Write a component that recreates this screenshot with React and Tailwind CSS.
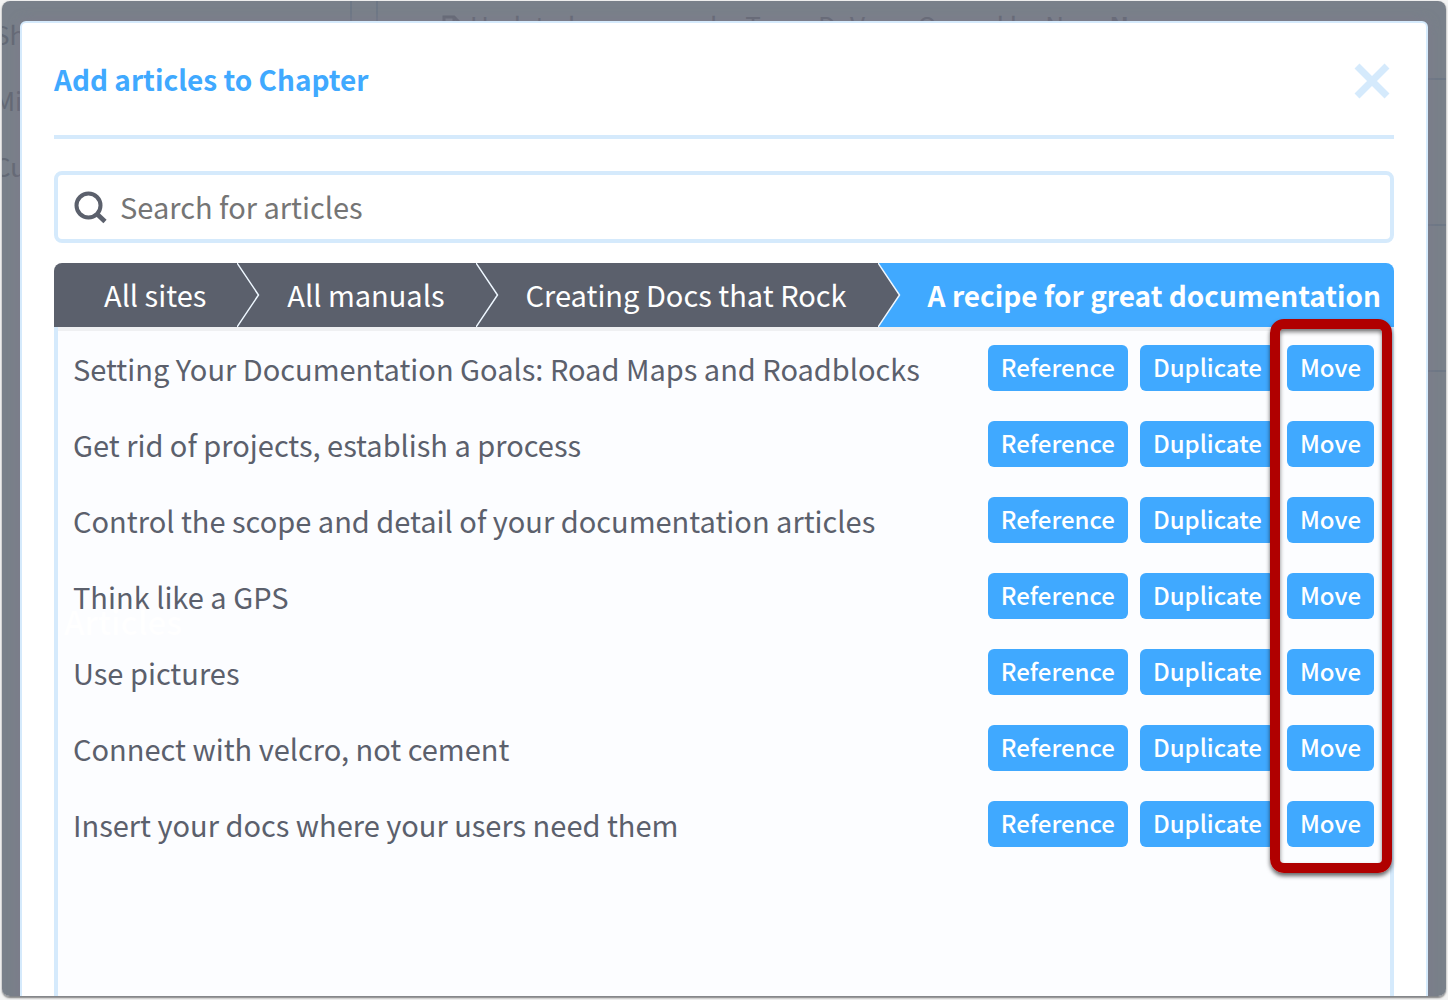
import React, { useState } from "react";

const ARTICLES = [
  "Setting Your Documentation Goals: Road Maps and Roadblocks",
  "Get rid of projects, establish a process",
  "Control the scope and detail of your documentation articles",
  "Think like a GPS",
  "Use pictures",
  "Connect with velcro, not cement",
  "Insert your docs where your users need them",
];

const CRUMBS = ["All sites", "All manuals", "Creating Docs that Rock"];

const SearchIcon = () => (
  <svg className="w-9 h-9 shrink-0" viewBox="0 0 36 36" fill="none" stroke="#5b606c" aria-hidden="true">
    <circle cx="16.500" cy="16.500" r="12" strokeWidth="4" />
    <path d="M25 25L33 32.500" strokeWidth="4.600" />
  </svg>
);

const CloseIcon = () => (
  <svg className="w-9 h-9" viewBox="0 0 36 36" fill="none" stroke="#d5eafc" strokeWidth="7" aria-hidden="true">
    <path d="M3 3L33 33M33 3L3 33" />
  </svg>
);

const Crumb = ({ label }) => (
  <li className="relative flex bg-[#5b606c]">
    <a href="#" className="flex items-center pl-[50px] pr-[31px] pb-0.5 text-[29px] leading-10 text-white whitespace-nowrap">
      {label}
    </a>
    <svg className="absolute left-full top-0 z-10 h-full w-[23px]" viewBox="0 0 23 64" preserveAspectRatio="none" aria-hidden="true">
      <path d="M-1 0H0L21.500 32L0 64H-1Z" fill="#5b606c" />
      <path d="M0 0L21.500 32L0 64" fill="none" stroke="#eef7ff" strokeWidth="1.500" />
    </svg>
  </li>
);

const ActionButton = ({ children }) => (
  <button className="h-[46px] rounded-md bg-[#40a9ff] px-[13px] pb-0.5 text-2xl leading-8 font-medium text-white">
    {children}
  </button>
);

const ArticleRow = ({ title }) => (
  <li className="flex h-[46px] items-center gap-3">
    <span className="flex-1 text-[29px] leading-10 text-[#5b606c]">{title}</span>
    <ActionButton>Reference</ActionButton>
    <ActionButton>Duplicate</ActionButton>
    <ActionButton>Move</ActionButton>
  </li>
);

// Dimmed manual page that stays behind the dialog
const Backdrop = () => (
  <div className="absolute inset-0 flex bg-[#79808a] text-[#636975]" aria-hidden="true">
    <div className="w-[350px] shrink-0 border-r-2 border-[#6e7886] text-[26px] leading-[66px] whitespace-nowrap">
      <div className="-ml-2">Share</div>
      <div className="-ml-2">Min</div>
      <div className="-ml-2">Custom</div>
    </div>
    <div className="ml-6 flex-1 border-l-2 border-[#6e7886]">
      <div className="flex h-[79px] items-start gap-2 border-b-2 border-[#6e7886] pt-1 pl-16 text-[26px] leading-10 whitespace-nowrap">
        <svg className="mt-2 h-7 w-5" viewBox="0 0 20 28" fill="none" stroke="currentColor" strokeWidth="3" aria-hidden="true">
          <path d="M2 26V4H12L18 10V26Z" />
          <path d="M12 4V10H18" />
        </svg>
        <span>Updated a year ago by Tessa DeVore. Owned by Nora <b>N</b></span>
      </div>
      <div className="h-[146px] border-b-2 border-[#6e7886]" />
      <div className="h-[146px] border-b-2 border-[#6e7886]" />
    </div>
  </div>
);

const App = () => {
  const [query, setQuery] = useState("");

  return (
    <div className="h-screen overflow-hidden bg-[#f4f4f4] px-0.5 pt-px pb-[3px] font-['Noto_Sans_CJK_SC','Noto_Sans',sans-serif]">
      <div className="relative h-full overflow-hidden rounded-lg border-b border-[#85878b] shadow-[0_1px_2px_rgba(0,0,0,0.5)]">
        <Backdrop />
        <div
          role="dialog"
          aria-labelledby="dialog-title"
          className="relative mx-[18px] mt-5 flex h-full flex-col rounded-t-md border-2 border-[#d5eafc] bg-white px-8 shadow-[0_0_12px_rgba(130,120,140,0.6)]"
        >
          <header className="flex h-[116px] items-center justify-between border-b-4 border-[#d5eafc]">
            <h1 id="dialog-title" className="text-[28px] leading-10 font-bold text-[#40a9ff]">Add articles to Chapter</h1>
            <button aria-label="Close" className="mt-1 mr-1">
              <CloseIcon />
            </button>
          </header>

          <label className="mt-8 flex h-[72px] shrink-0 items-center gap-3 rounded-lg border-4 border-[#d5eafc] px-3.5">
            <SearchIcon />
            <input
              type="text"
              aria-label="Search for articles"
              value={query}
              onChange={(e) => setQuery(e.target.value)}
              placeholder="Search for articles"
              className="h-10 flex-1 pb-0.5 text-[29px] leading-10 text-[#5b606c] outline-none placeholder:text-[#757575]"
            />
          </label>

          <nav aria-label="Breadcrumb" className="mt-5 h-16 shrink-0 overflow-hidden rounded-t-lg">
            <ol className="flex h-full">
              {CRUMBS.map((label) => (
                <Crumb key={label} label={label} />
              ))}
              <li className="flex flex-1 items-center bg-[#40a9ff] pl-[50px] text-[28px] leading-10 font-bold text-white whitespace-nowrap">
                A recipe for great documentation
              </li>
            </ol>
          </nav>

          <section className="relative flex-1 border-x-4 border-[#d5eafc] bg-[#fcfdff]">
            <div className="h-1 bg-[#eff0f2]" />
            <div className="absolute left-1.5 top-[270px] text-[33px] leading-12 font-medium text-white" aria-hidden="true">
              Articles
            </div>
            <ul className="relative flex flex-col gap-[30px] pr-4 pl-[15px] pt-3.5">
              {ARTICLES.map((title) => (
                <ArticleRow key={title} title={title} />
              ))}
            </ul>
            {/* highlight around the Move column */}
            <div className="pointer-events-none absolute -top-2 -right-0.5 h-[554px] w-[122px] rounded-[14px] border-10 border-[#b00000] shadow-[0_3px_4px_rgba(0,0,0,0.6),inset_0_3px_4px_rgba(0,0,0,0.5)]" />
          </section>
        </div>
      </div>
    </div>
  );
};

export default App;
